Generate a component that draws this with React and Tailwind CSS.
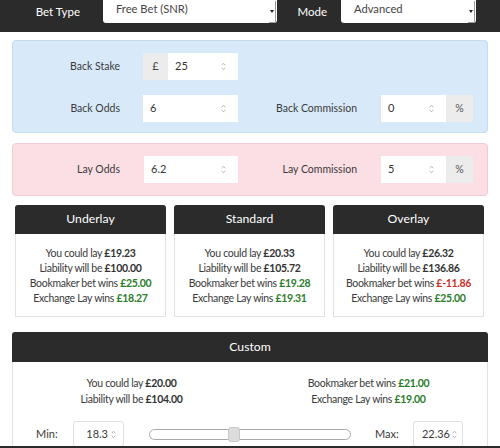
import React from 'react';

const font = { fontFamily: 'Lato, "Open Sans", sans-serif' };

function Spinner() {
  return (
    <svg width="5" height="9" viewBox="0 0 5 9" className="shrink-0">
      <path d="M0.8 3.2 L2.5 1.2 L4.2 3.2" fill="none" stroke="#b0b0b0" strokeWidth="0.9" />
      <path d="M0.8 5.8 L2.5 7.8 L4.2 5.8" fill="none" stroke="#b0b0b0" strokeWidth="0.9" />
    </svg>
  );
}

function NumberBox({ value, prefix, suffix, width }) {
  return (
    <div className={`flex h-[27px] ${width}`}>
      {prefix && (
        <div className="w-[25px] bg-[#ececec] flex items-center justify-center text-[11px] text-[#444]">{prefix}</div>
      )}
      <div className="flex-1 bg-white flex items-center pl-[7px] pr-[12px] text-[11px] text-[#333]">
        <span className="flex-1">{value}</span>
        <Spinner />
      </div>
      {suffix && (
        <div className="w-[27px] bg-[#ececec] flex items-center justify-center text-[10.5px] text-[#555]">{suffix}</div>
      )}
    </div>
  );
}

function Field({ label, children, width }) {
  return (
    <>
      <div className={`${width} text-right text-[10.5px] text-[#3a3a3a]`}>{label}</div>
      {children}
    </>
  );
}

function Select({ value, width }) {
  return (
    <div className={`${width} h-[27px] -mt-[4px] bg-white rounded-b-[3px] flex items-center pl-[13px] text-[11.2px] text-[#444]`}>
      <span className="flex-1">{value}</span>
      <div className="w-[7px] h-[22px] mr-[1px] self-end border-r border-b border-[#9a9a9a] rounded-br-[2px] flex items-center justify-center">
        <svg width="4" height="3" viewBox="0 0 4 3">
          <path d="M0 0 L4 0 L2 3 Z" fill="#222" />
        </svg>
      </div>
    </div>
  );
}

function ResultCard({ title, lay, liability, bookie, exchange }) {
  return (
    <div className="flex-1 flex flex-col">
      <div className="h-[29px] bg-[#2b2b2b] rounded-t-[3px] flex items-center justify-center text-white text-[12.2px]">{title}</div>
      <div className="border border-t-0 border-[#e2e2e2] pt-[12px] pb-[10px] text-center text-[10.5px] tracking-[-0.3px] leading-[15px] text-[#3a3a3a]">
        <div>You could lay <b className="text-[#333]">{lay}</b></div>
        <div>Liability will be <b className="text-[#333]">{liability}</b></div>
        <div>Bookmaker bet wins <b className={bookie.startsWith('£-') ? 'text-[#c9302c]' : 'text-[#2a7d2a]'}>{bookie}</b></div>
        <div>Exchange Lay wins <b className="text-[#2a7d2a]">{exchange}</b></div>
      </div>
    </div>
  );
}

export default function App() {
  return (
    <div className="bg-white w-[500px] min-h-[448px]" style={font}>
      {/* settings bar */}
      <div className="h-[32px] bg-[#2b2b2b] flex items-start">
        <div className="w-[103px] pr-[23px] pt-[3px] text-right text-white text-[11.5px]">Bet Type</div>
        <Select value="Free Bet (SNR)" width="w-[174px]" />
        <div className="w-[64px] pr-[14px] pt-[3px] text-right text-white text-[11.5px]">Mode</div>
        <Select value="Advanced" width="w-[135px]" />
      </div>

      {/* back bet */}
      <div className="mx-[12px] mt-[8px] h-[93px] bg-[#d8eaf9] border border-[#c3dcef] rounded-[4px] pt-[12px] flex flex-col gap-[15px]">
        <div className="flex items-center">
          <Field label="Back Stake" width="w-[107px]">
            <div className="ml-[23px]"><NumberBox value="25" prefix="£" width="w-[95px]" /></div>
          </Field>
        </div>
        <div className="flex items-center">
          <Field label="Back Odds" width="w-[107px]">
            <div className="ml-[23px]"><NumberBox value="6" width="w-[95px]" /></div>
          </Field>
          <Field label="Back Commission" width="w-[119px]">
            <div className="ml-[24px]"><NumberBox value="0" suffix="%" width="w-[92px]" /></div>
          </Field>
        </div>
      </div>

      {/* lay bet */}
      <div className="mx-[12px] mt-[10px] h-[53px] bg-[#fcdfe5] border border-[#f4c9d2] rounded-[4px] flex items-center">
        <Field label="Lay Odds" width="w-[107px]">
          <div className="ml-[24px]"><NumberBox value="6.2" width="w-[94px]" /></div>
        </Field>
        <Field label="Lay Commission" width="w-[119px]">
          <div className="ml-[24px]"><NumberBox value="5" suffix="%" width="w-[92px]" /></div>
        </Field>
      </div>

      {/* strategies */}
      <div className="flex gap-[8px] pl-[15px] pr-[16px] mt-[9px]">
        <ResultCard title="Underlay" lay="£19.23" liability="£100.00" bookie="£25.00" exchange="£18.27" />
        <ResultCard title="Standard" lay="£20.33" liability="£105.72" bookie="£19.28" exchange="£19.31" />
        <ResultCard title="Overlay" lay="£26.32" liability="£136.86" bookie="£-11.86" exchange="£25.00" />
      </div>

      {/* custom lay */}
      <div className="mx-[12px] mt-[15px]">
        <div className="h-[30px] bg-[#2b2b2b] rounded-t-[3px] flex items-center justify-center text-white text-[12.2px]">Custom</div>
        <div className="border border-t-0 border-[#e2e2e2] pt-[13px] pb-[10px]">
          <div className="grid grid-cols-2 text-center text-[10.5px] tracking-[-0.3px] leading-[16px] text-[#3a3a3a]">
            <div>
              <div>You could lay <b className="text-[#333]">£20.00</b></div>
              <div>Liability will be <b className="text-[#333]">£104.00</b></div>
            </div>
            <div>
              <div>Bookmaker bet wins <b className="text-[#2a7d2a]">£21.00</b></div>
              <div>Exchange Lay wins <b className="text-[#2a7d2a]">£19.00</b></div>
            </div>
          </div>
          <div className="flex items-center mt-[14px] pl-[23px] text-[11px] text-[#3a3a3a]">
            <div className="w-[37px]">Min:</div>
            <div className="w-[51px] h-[26px] border border-[#e0e0e0] rounded-[3px] flex items-center justify-end pr-[7px] gap-[3px]">
              <span>18.3</span><Spinner />
            </div>
            <div className="ml-[25px] w-[202px] h-[11px] border border-[#a9a9a9] rounded-full bg-white relative">
              <div className="absolute left-[78px] -top-[3px] w-[12px] h-[15px] rounded-[3px] bg-[#dcdcdc] border border-[#c8c8c8]" />
            </div>
            <div className="ml-[24px] w-[38px]">Max:</div>
            <div className="w-[50px] h-[26px] border border-[#e0e0e0] rounded-[3px] flex items-center justify-end pr-[5px] gap-[2px]">
              <span>22.36</span><Spinner />
            </div>
          </div>
        </div>
      </div>

      {/* page footer edge */}
      <div className="fixed left-0 right-0 bottom-0 h-[2px] bg-[#2b2b2b]" />
    </div>
  );
}
